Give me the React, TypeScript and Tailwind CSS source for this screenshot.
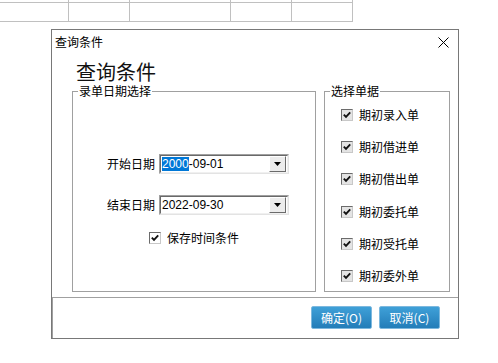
const billTypes = ["期初录入单", "期初借进单", "期初借出单", "期初委托单", "期初受托单", "期初委外单"]

const gridCols = ["w-[69px]", "w-[61px]", "w-[101px]", "w-[61px]", "w-[61px]"]

function CheckBox({ gray = false }: { gray?: boolean }) {
  return (
    <span
      className={`w-[12px] h-[12px] shrink-0 flex items-center justify-center border border-t-[#6b6b6b] border-l-[#6b6b6b] border-b-[#c8c8c8] border-r-[#c8c8c8] ${
        gray ? "bg-[#e4e4e4]" : "bg-white"
      }`}
    >
      <svg width="10" height="10" viewBox="0 0 10 10">
        <path d="M1.8 4.6 L4 6.8 L8.2 2.4" fill="none" stroke="#111" strokeWidth={1.9} />
      </svg>
    </span>
  )
}

function DateField({ value, selected }: { value: string; selected?: string }) {
  return (
    <div className="w-[130px] h-[20px] border border-t-[#a0a0a0] border-l-[#a0a0a0] border-b-[#e3e3e3] border-r-[#e3e3e3]">
      <div className="h-full flex items-center border border-t-[#696969] border-l-[#696969] border-b-[#f0f0f0] border-r-[#f0f0f0] bg-white pl-[1px] pr-[1px]">
        <span className="flex-1 text-[12px] leading-[14px] font-['Liberation_Sans',sans-serif] text-black">
          {selected && <span className="bg-[#0078d7] text-white">{selected}</span>}
          {value}
        </span>
        <span className="w-[17px] h-[16px] flex items-center justify-center bg-[#ececec] border border-t-white border-l-white border-b-[#6b6b6b] border-r-[#6b6b6b]">
          <svg width="7" height="4" viewBox="0 0 7 4">
            <path d="M0 0 H7 L3.5 4 Z" fill="#000" />
          </svg>
        </span>
      </div>
    </div>
  )
}

export default function App() {
  return (
    <div className="relative w-[498px] h-[363px] bg-white overflow-hidden font-['Noto_Sans_CJK_SC','Liberation_Sans',sans-serif] text-black">
      {/* sheet behind the dialog */}
      <div className="w-[353px]">
        <div className="flex h-[2px]">
          {gridCols.map((w, i) => (
            <div key={i} className={`${w} h-full border-r border-[#c0c0c0]`} />
          ))}
        </div>
        <div className="flex h-[20px] border-t border-b border-[#c0c0c0]">
          {gridCols.map((w, i) => (
            <div key={i} className={`${w} h-full border-r border-[#c0c0c0]`} />
          ))}
        </div>
      </div>

      {/* dialog */}
      <div className="absolute left-[51px] top-[29px] w-[408px] h-[310px] border border-[#787878] bg-white flex flex-col">
        <div className="h-[24px] shrink-0 flex items-center justify-between pl-[3px] pr-[9px]">
          <span className="text-[12px] leading-[16px]">查询条件</span>
          <svg width="11" height="11" viewBox="0 0 11 11">
            <path d="M0.5 0.5 L10.5 10.5 M10.5 0.5 L0.5 10.5" stroke="#000" strokeWidth={1} />
          </svg>
        </div>

        <div className="mt-[7px] h-[22px] pl-[24px] text-[20px] leading-[22px] text-[#111]">查询条件</div>

        <div className="mt-[8px] h-[201px] flex gap-[8px] pl-[20px] pr-[8px]">
          <div className="relative w-[244px] h-full border border-[#a0a0a0]">
            <span className="absolute left-[5px] top-[-8px] px-[1px] bg-white text-[12px] leading-[14px]">录单日期选择</span>
            <div className="flex flex-col pt-[62px] pl-[34px]">
              <div className="flex items-center gap-[4px]">
                <span className="text-[12px] leading-[16px]">开始日期</span>
                <DateField selected="2000" value="-09-01" />
              </div>
              <div className="flex items-center gap-[4px] mt-[21px]">
                <span className="text-[12px] leading-[16px]">结束日期</span>
                <DateField value="2022-09-30" />
              </div>
              <div className="flex items-center gap-[6px] mt-[15px] pl-[42px]">
                <CheckBox />
                <span className="text-[12px] leading-[16px]">保存时间条件</span>
              </div>
            </div>
          </div>

          <div className="relative w-[126px] h-full border border-[#a0a0a0]">
            <span className="absolute left-[5px] top-[-8px] px-[1px] bg-white text-[12px] leading-[14px]">选择单据</span>
            <div className="flex flex-col gap-[16.2px] pt-[15px] pl-[16px]">
              {billTypes.map((t) => (
                <div key={t} className="flex items-center gap-[6px] h-[16px]">
                  <CheckBox gray />
                  <span className="text-[12px] leading-[16px]">{t}</span>
                </div>
              ))}
            </div>
          </div>
        </div>

        <div className="mt-[5px] flex-1 border-t border-l border-[#a0a0a0] flex justify-end items-start gap-[7px] pt-[8px] pr-[18px]">
          <button className="w-[61px] h-[23px] rounded-[2px] border border-[#7db8de] bg-gradient-to-b from-[#3fa0d8] to-[#237db8] text-white text-[12px] leading-[16px]">
            确定(O)
          </button>
          <button className="w-[61px] h-[23px] rounded-[2px] border border-[#7db8de] bg-gradient-to-b from-[#3fa0d8] to-[#237db8] text-white text-[12px] leading-[16px]">
            取消(C)
          </button>
        </div>
      </div>
    </div>
  )
}
